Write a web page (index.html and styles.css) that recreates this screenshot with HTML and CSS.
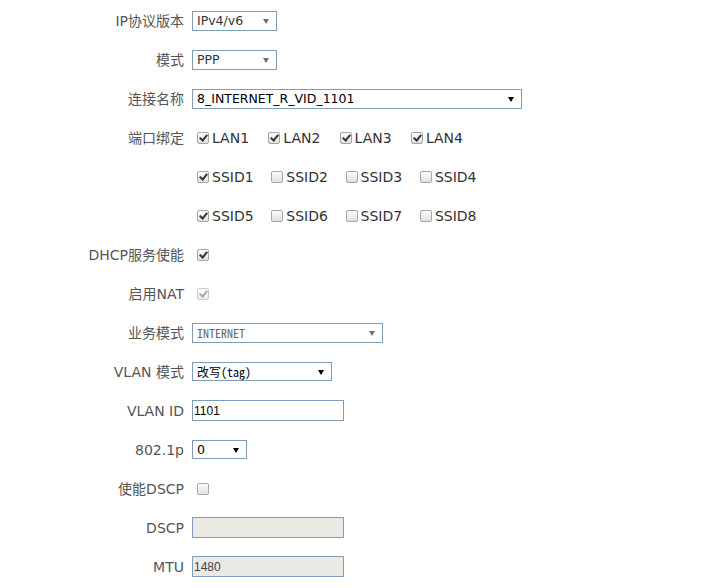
FILE: index.html
```html
<!DOCTYPE html>
<html lang="zh-CN">
<head>
    <meta charset="UTF-8">
    <meta name="viewport" content="width=device-width, initial-scale=1.0">
    <title>WAN 连接配置</title>
    <link rel="stylesheet" href="styles.css">
</head>
<body>
    <form class="wan-form">
        <div class="row">
            <label class="lbl">IP协议版本</label>
            <div class="ctl">
                <span class="sel dim w-ip"><select><option>IPv4/v6</option></select></span>
            </div>
        </div>
        <div class="row">
            <label class="lbl">模式</label>
            <div class="ctl">
                <span class="sel dim w-ip"><select><option>PPP</option></select></span>
            </div>
        </div>
        <div class="row">
            <label class="lbl">连接名称</label>
            <div class="ctl">
                <span class="sel w-conn"><select class="dark"><option>8_INTERNET_R_VID_1101</option></select></span>
            </div>
        </div>
        <div class="row">
            <label class="lbl">端口绑定</label>
            <div class="ctl checks lan">
                <label class="check"><input type="checkbox" class="chk" checked>LAN1</label>
                <label class="check"><input type="checkbox" class="chk" checked>LAN2</label>
                <label class="check"><input type="checkbox" class="chk" checked>LAN3</label>
                <label class="check"><input type="checkbox" class="chk" checked>LAN4</label>
            </div>
        </div>
        <div class="row">
            <span class="lbl"></span>
            <div class="ctl checks ssid">
                <label class="check"><input type="checkbox" class="chk" checked>SSID1</label>
                <label class="check"><input type="checkbox" class="chk">SSID2</label>
                <label class="check"><input type="checkbox" class="chk">SSID3</label>
                <label class="check"><input type="checkbox" class="chk">SSID4</label>
            </div>
        </div>
        <div class="row">
            <span class="lbl"></span>
            <div class="ctl checks ssid">
                <label class="check"><input type="checkbox" class="chk" checked>SSID5</label>
                <label class="check"><input type="checkbox" class="chk">SSID6</label>
                <label class="check"><input type="checkbox" class="chk">SSID7</label>
                <label class="check"><input type="checkbox" class="chk">SSID8</label>
            </div>
        </div>
        <div class="row">
            <label class="lbl">DHCP服务使能</label>
            <div class="ctl"><input type="checkbox" class="chk" checked></div>
        </div>
        <div class="row">
            <label class="lbl">启用NAT</label>
            <div class="ctl"><input type="checkbox" class="chk" checked disabled></div>
        </div>
        <div class="row">
            <label class="lbl">业务模式</label>
            <div class="ctl">
                <span class="sel dim w-svc"><select class="mono"><option>INTERNET</option></select></span>
            </div>
        </div>
        <div class="row">
            <label class="lbl">VLAN 模式</label>
            <div class="ctl">
                <span class="sel w-vlan"><select class="mono dark"><option>改写(tag)</option></select></span>
            </div>
        </div>
        <div class="row">
            <label class="lbl">VLAN ID</label>
            <div class="ctl"><input type="text" class="txt" value="1101"></div>
        </div>
        <div class="row">
            <label class="lbl">802.1p</label>
            <div class="ctl">
                <span class="sel w-p"><select class="dark"><option>0</option></select></span>
            </div>
        </div>
        <div class="row">
            <label class="lbl">使能DSCP</label>
            <div class="ctl"><input type="checkbox" class="chk"></div>
        </div>
        <div class="row">
            <label class="lbl">DSCP</label>
            <div class="ctl"><input type="text" class="txt" value="" disabled></div>
        </div>
        <div class="row">
            <label class="lbl">MTU</label>
            <div class="ctl"><input type="text" class="txt" value="1480" disabled></div>
        </div>
    </form>
</body>
</html>
```

FILE: styles.css
```css
* {
    box-sizing: border-box;
}
body {
    margin: 0;
    background: #fff;
    font-family: "DejaVu Sans", "Noto Sans CJK SC", sans-serif;
    font-size: 14px;
    color: #555;
}
.wan-form {
    padding-top: 1px;
}
.row {
    display: grid;
    grid-template-columns: 184px 1fr;
    column-gap: 8px;
    height: 39px;
    align-items: center;
}
.lbl {
    text-align: right;
    white-space: nowrap;
    line-height: 20px;
}
.ctl {
    display: flex;
    align-items: center;
}

/* selects */
.sel {
    position: relative;
    display: inline-block;
    height: 20px;
}
.sel select {
    -webkit-appearance: none;
    appearance: none;
    width: 100%;
    height: 100%;
    margin: 0;
    padding: 0 14px 0 4px;
    border: 1px solid #7f9db9;
    border-radius: 0;
    background: #fff;
    font-family: "DejaVu Sans", sans-serif;
    font-size: 12.5px;
    color: #333;
    outline: none;
}
.sel select.dark {
    color: #000;
}
.sel select.mono {
    font-family: "Noto Sans Mono CJK SC", "Liberation Mono", "Noto Sans CJK SC", monospace;
    font-size: 12px;
}
.sel.dim select.mono {
    color: #666;
}
.sel::after {
    content: "";
    position: absolute;
    right: 8px;
    top: 50%;
    margin-top: -2px;
    border-left: 3px solid transparent;
    border-right: 3px solid transparent;
    border-top: 5px solid #000;
    pointer-events: none;
}
.sel.dim::after {
    border-top-color: #707070;
}
.w-ip { width: 85px; }
.w-conn { width: 330px; }
.w-svc { width: 191px; }
.w-vlan { width: 140px; height: 19px; }
.w-p { width: 55px; height: 19px; }

/* checkboxes */
.chk {
    -webkit-appearance: none;
    appearance: none;
    position: relative;
    flex: none;
    width: 12px;
    height: 12px;
    margin: 0 3px 0 5px;
    border: 1px solid #a6a6a6;
    border-radius: 2px;
    background: linear-gradient(#fdfdfd, #e0e0e0);
}
.chk:checked::after {
    content: "";
    position: absolute;
    left: 3px;
    top: 0;
    width: 3px;
    height: 6px;
    border: solid #333;
    border-width: 0 2px 2px 0;
    transform: rotate(40deg);
}
.chk:disabled {
    border-color: #cdcdcd;
    background: linear-gradient(#fbfbfb, #eeeeee);
}
.chk:disabled:checked::after {
    border-color: #a9a9a9;
}
.checks {
    display: flex;
}
.check {
    display: flex;
    align-items: center;
    font-family: "DejaVu Sans", sans-serif;
    font-size: 14px;
    color: #333;
}
.lan .check { width: 71.3px; }
.ssid .check { width: 74.3px; }

/* text inputs */
.txt {
    width: 152px;
    height: 21px;
    margin: 0;
    padding: 0 1px;
    border: 1px solid #7f9db9;
    border-radius: 0;
    background: #fff;
    font-family: "Liberation Sans", sans-serif;
    font-size: 12px;
    color: #000;
    outline: none;
}
.txt:disabled {
    background: #ebe9e3;
    color: #444;
}
```
